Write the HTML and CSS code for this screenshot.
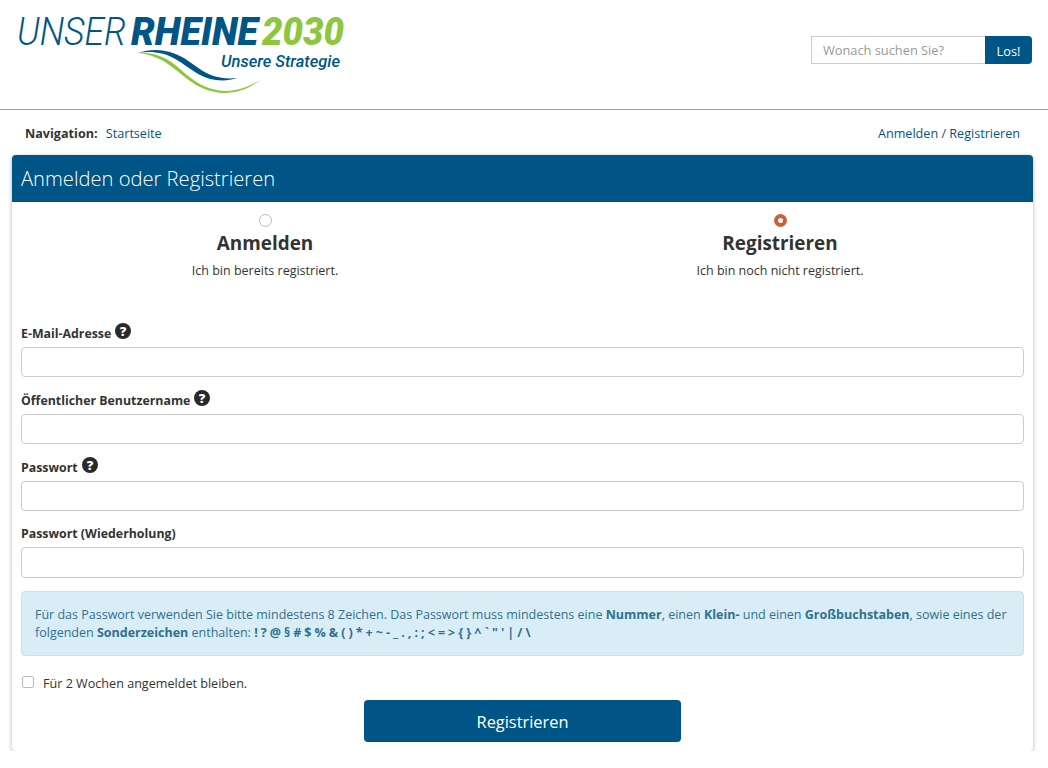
FILE: index.html
```html
<!DOCTYPE html>
<html lang="de">
<head>
    <meta charset="UTF-8">
    <meta name="viewport" content="width=device-width, initial-scale=1.0">
    <title>Anmelden oder Registrieren</title>
    <link rel="stylesheet" href="styles.css">
</head>
<body>
    <header class="site-header">
        <svg class="logo" width="360" height="109" viewBox="0 0 360 109">
            <text class="logo-thin" x="17" y="45" textLength="109" lengthAdjust="spacingAndGlyphs">UNSER</text>
            <text class="logo-bold" x="131" y="45" textLength="127" lengthAdjust="spacingAndGlyphs">RHEINE</text>
            <text class="logo-green" x="262" y="45" textLength="82" lengthAdjust="spacingAndGlyphs">2030</text>
            <text class="logo-sub" x="221" y="67" textLength="119" lengthAdjust="spacingAndGlyphs">Unsere Strategie</text>
            <path class="wave-blue" d="M138 53 C152 48 168 49 182 57 C198 66 208 81 237 78 C231 80 224 81 216 80 C200 78 190 68 177 60 C164 52 150 51 138 53Z"/>
            <path class="wave-green" d="M138 53 C150 52 162 55 174 64 C188 75 200 90 226 91 C238 91 250 86 260 80 C250 88 238 93 224 93 C200 92 188 79 172 67 C162 59 150 54 138 53Z"/>
        </svg>
        <form class="search">
            <input class="search-input" type="text" placeholder="Wonach suchen Sie?">
            <button type="button" class="search-btn">Los!</button>
        </form>
    </header>

    <nav class="site-nav">
        <div><b class="nav-label">Navigation:</b> <a href="#">Startseite</a></div>
        <div><a href="#">Anmelden</a> / <a href="#">Registrieren</a></div>
    </nav>

    <main class="card">
        <h1 class="card-title">Anmelden oder Registrieren</h1>
        <form class="card-body">
            <div class="choices">
                <label class="choice">
                    <span class="radio"></span>
                    <strong class="choice-title">Anmelden</strong>
                    <span class="choice-text">Ich bin bereits registriert.</span>
                </label>
                <label class="choice">
                    <span class="radio checked"></span>
                    <strong class="choice-title">Registrieren</strong>
                    <span class="choice-text">Ich bin noch nicht registriert.</span>
                </label>
            </div>

            <div class="form-group">
                <label>E-Mail-Adresse <svg class="help" viewBox="0 0 16 16"><circle cx="8" cy="8" r="8"/><text x="8" y="12.6" class="help-mark">?</text></svg></label>
                <input type="text">
            </div>
            <div class="form-group">
                <label>Öffentlicher Benutzername <svg class="help" viewBox="0 0 16 16"><circle cx="8" cy="8" r="8"/><text x="8" y="12.6" class="help-mark">?</text></svg></label>
                <input type="text">
            </div>
            <div class="form-group">
                <label>Passwort <svg class="help" viewBox="0 0 16 16"><circle cx="8" cy="8" r="8"/><text x="8" y="12.6" class="help-mark">?</text></svg></label>
                <input type="password">
            </div>
            <div class="form-group">
                <label>Passwort (Wiederholung)</label>
                <input type="password">
            </div>

            <div class="alert">
                Für das Passwort verwenden Sie bitte mindestens 8 Zeichen. Das Passwort muss mindestens eine <b>Nummer</b>, einen <b>Klein-</b> und einen <b>Großbuchstaben</b>, sowie eines der folgenden <b>Sonderzeichen</b> enthalten: <b class="chars">! ? @ § # $ % &amp; ( ) * + ~ - _ . , : ; &lt; = &gt; { } ^ ` " ' | / \</b>
            </div>

            <label class="remember">
                <span class="checkbox"></span>
                Für 2 Wochen angemeldet bleiben.
            </label>

            <button type="button" class="submit-btn">Registrieren</button>
        </form>
    </main>
</body>
</html>
```

FILE: styles.css
```css
* {
    box-sizing: border-box;
}
body {
    font-family: "Open Sans", Arial, sans-serif;
    font-size: 12.6px;
    line-height: 20px;
    color: #333;
    background: #fff;
    margin: 0;
}
a {
    color: #005587;
    text-decoration: none;
}
.site-header {
    display: flex;
    justify-content: space-between;
    align-items: center;
    height: 110px;
    border-bottom: 1px solid #94b43c;
    padding-right: 16px;
}
.logo {
    display: block;
}
.logo text {
    font-family: Roboto, Arial, sans-serif;
    font-style: italic;
}
.logo-thin {
    font-size: 38px;
    font-weight: 300;
    fill: #005587;
}
.logo-bold {
    font-size: 38px;
    font-weight: 900;
    fill: #005587;
}
.logo-green {
    font-size: 38px;
    font-weight: 900;
    fill: #8dc63f;
}
.logo-sub {
    font-size: 16px;
    font-weight: 500;
    fill: #005587;
}
.wave-blue {
    fill: #005587;
}
.wave-green {
    fill: #8dc63f;
}
.search {
    display: flex;
    width: 221px;
    height: 28px;
    margin-top: -10px;
}
.search-input {
    flex: 1;
    min-width: 0;
    height: 28px;
    padding: 1px 11px 0;
    border: 1px solid #ccc;
    border-right: none;
    font-family: inherit;
    font-size: 12.8px;
}
.search-input::placeholder {
    color: #999;
}
.search-btn {
    width: 47px;
    height: 28px;
    border: none;
    border-radius: 0 4px 4px 0;
    background: #005587;
    color: #fff;
    font-family: inherit;
    font-size: 12.8px;
    padding: 2px 0 0;
}
.site-nav {
    display: flex;
    justify-content: space-between;
    padding: 14px 28px 11px 25px;
    color: #005587;
}
.nav-label {
    color: #333;
    margin-right: 5px;
}
.card {
    margin: 0 15px 0 12px;
    height: 596px;
    background: #fff;
    border-radius: 4px;
    box-shadow: 0 1px 4px rgba(0,0,0,0.3);
}
.card-title {
    margin: 0;
    height: 47px;
    padding: 0 9px;
    background: #005587;
    border-radius: 4px 4px 0 0;
    color: #fff;
    font-size: 20.16px;
    font-weight: 300;
    line-height: 47px;
}
.card-body {
    padding: 12px 9px 0;
}
.choices {
    display: flex;
    gap: 27px;
    height: 109px;
}
.choice {
    flex: 1;
    display: flex;
    flex-direction: column;
    align-items: center;
}
.radio {
    width: 13px;
    height: 13px;
    border: 1px solid #bbb;
    border-radius: 50%;
    background: #fff;
}
.radio.checked {
    border: 4px solid #c9603a;
}
.choice-title {
    font-size: 18.9px;
    line-height: 26px;
    margin: 3px 0 5px;
}
.choice-text {
    font-size: 12.5px;
}
.form-group {
    margin-bottom: 12.4px;
}
.form-group label {
    display: flex;
    align-items: flex-start;
    gap: 4px;
    height: 24px;
    padding-top: 1px;
    font-size: 12.35px;
    font-weight: 700;
    line-height: 20px;
}
.form-group input {
    display: block;
    width: 100%;
    height: 30.4px;
    border: 1px solid #ccc;
    border-radius: 4px;
}
.help {
    width: 16px;
    height: 16px;
    margin-top: -1px;
    fill: #2a2a2a;
}
.help-mark {
    fill: #fff;
    font-family: "Open Sans", Arial, sans-serif;
    font-size: 13px;
    font-weight: 800;
    text-anchor: middle;
}
.alert {
    height: 65px;
    margin-top: 13.4px;
    padding: 14px 13px;
    background: #d9edf7;
    border: 1px solid #bce8f1;
    border-radius: 4px;
    color: #31708f;
    font-size: 12.5px;
    line-height: 18px;
}
.chars {
    word-spacing: -0.2px;
}
.remember {
    display: flex;
    align-items: center;
    gap: 9px;
    height: 20px;
    margin: 18px 0 0 1px;
}
.checkbox {
    width: 12px;
    height: 12px;
    margin-top: -5px;
    border: 1px solid #bbb;
    border-radius: 2px;
    background: #fff;
}
.submit-btn {
    display: block;
    width: 317px;
    height: 42px;
    margin: 6px auto 0;
    padding: 2px 0 0;
    border: none;
    border-radius: 4px;
    background: #005587;
    color: #fff;
    font-family: inherit;
    font-size: 16.38px;
}
```
